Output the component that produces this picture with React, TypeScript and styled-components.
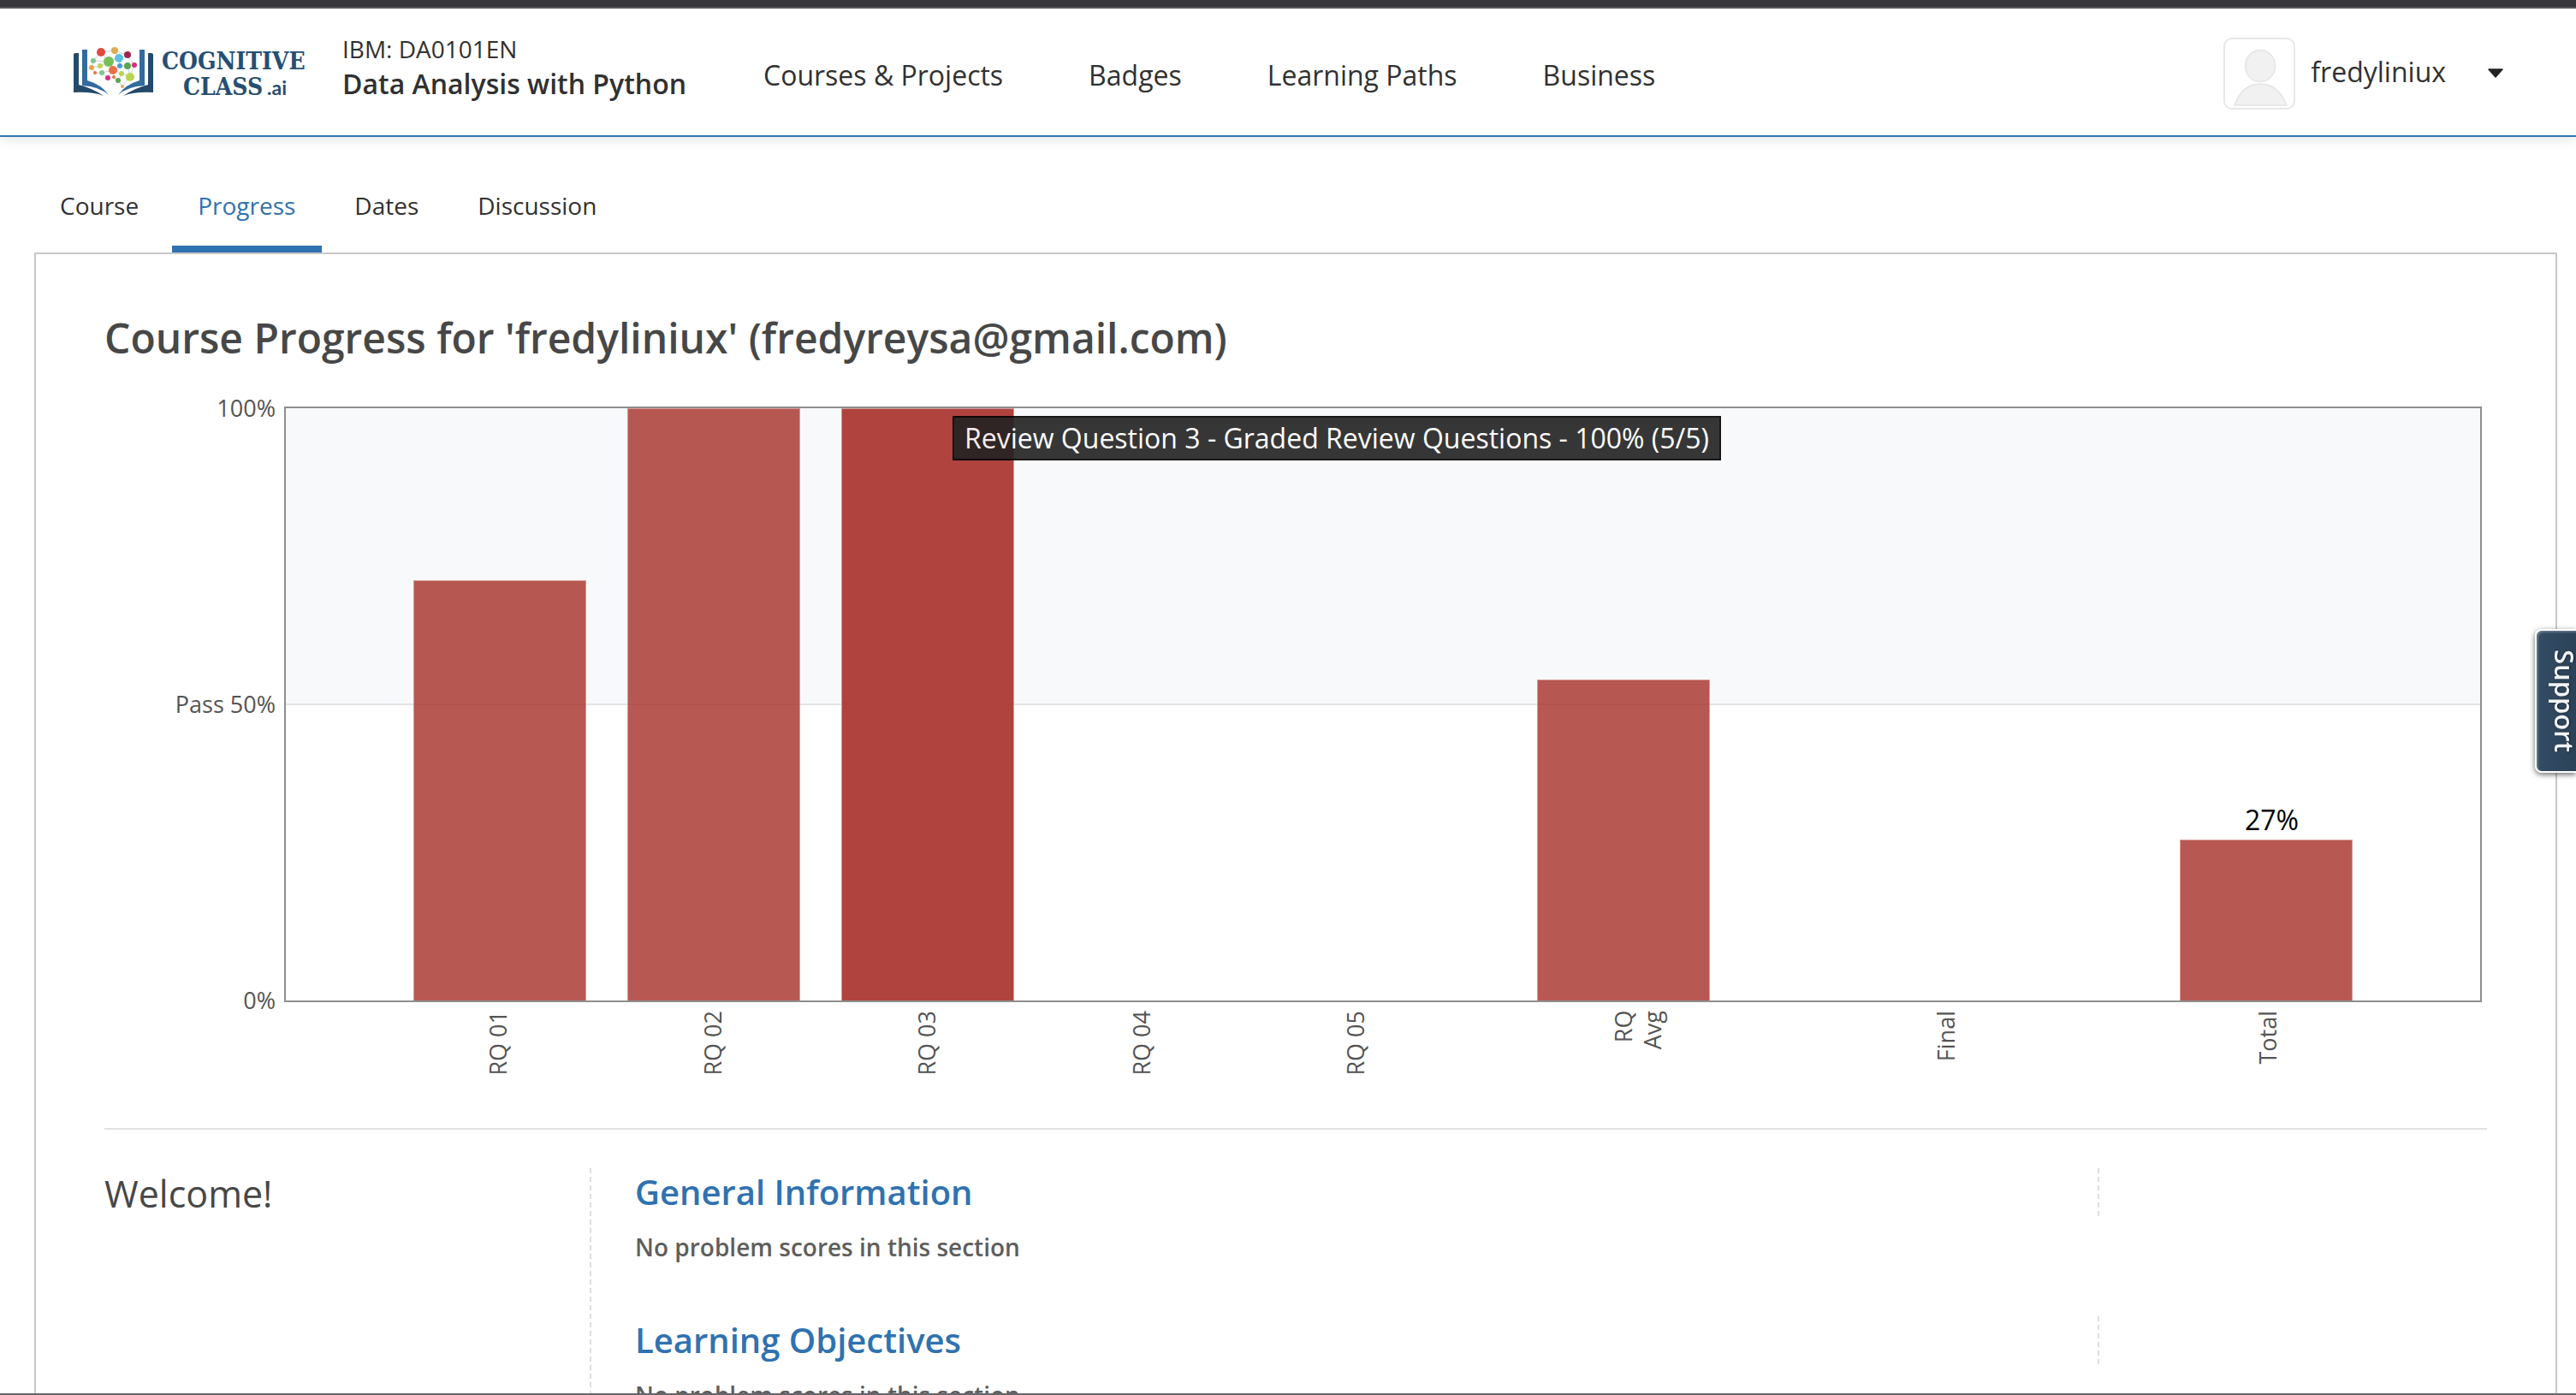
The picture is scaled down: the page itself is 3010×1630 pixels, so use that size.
import React from "react";
import styled, { createGlobalStyle } from "styled-components";

const GlobalStyle = createGlobalStyle`
  * { box-sizing: border-box; }
  body {
    margin: 0;
    background: #fff;
    color: #313131;
    font-family: "Open Sans", "Noto Sans", sans-serif;
    font-size: 28px;
    line-height: 40px;
  }
  h1, h2, h3, p { margin: 0; padding: 0; }
  a { color: inherit; text-decoration: none; }
`;

const Frame = styled.div`
  height: 100vh;
  overflow: hidden;
  border-top: 8px solid #36363b;
  border-bottom: 2px solid #66666a;
`;

const Header = styled.header`
  display: flex;
  align-items: center;
  height: 152px;
  padding: 0 82px 0 84px;
  border-top: 2px solid #58585c;
  border-bottom: 2px solid #3175b3;
  box-shadow: 0 2px 14px rgba(0, 0, 0, 0.12);
`;

const LogoLink = styled.a`
  display: block;
  width: 272px;
  height: 62px;
  margin-right: 44px;
`;

const LogoArt = styled.svg`
  display: block;
  width: 272px;
  height: 62px;
  overflow: visible;
`;

const CourseHeading = styled.h1`
  display: flex;
  flex-direction: column;
  padding-bottom: 10px;
  font-size: 32px;
  font-weight: 600;
  line-height: 44px;
  white-space: nowrap;
`;

const CourseCode = styled.span`
  font-size: 28px;
  font-weight: 400;
  line-height: 38px;
`;

const MainNav = styled.nav`
  display: flex;
  gap: 100px;
  margin-left: 90px;
  padding-top: 8px;
  font-size: 32px;
  line-height: 44px;
  white-space: nowrap;
`;

const UserMenu = styled.div`
  display: flex;
  align-items: center;
  margin-left: auto;
  font-size: 32px;
  line-height: 44px;
`;

const Avatar = styled.svg`
  width: 84px;
  height: 84px;
  margin: 4px 18px 0 0;
  border: 2px solid #e7e7e7;
  border-radius: 10px;
`;

const MenuButton = styled.button`
  display: flex;
  margin-left: 46px;
  padding: 4px 2px 0;
  border: 0;
  background: none;
`;

const Tabs = styled.nav`
  display: flex;
  gap: 8px;
  padding: 60px 40px 0;
`;

const Tab = styled.a<{ $active?: boolean }>`
  padding: 0 31px 27px 30px;
  color: ${(p) => (p.$active ? "#3072b0" : "#313131")};
  border-bottom: 8px solid ${(p) => (p.$active ? "#3072b0" : "transparent")};
`;

const Panel = styled.main`
  margin: 0 22px 0 40px;
  padding: 66px 80px 80px;
  border: 2px solid #c8c8c8;
`;

const PageTitle = styled.h2`
  color: #474747;
  font-size: 48px;
  font-weight: 600;
  line-height: 64px;
`;

const Chart = styled.figure`
  display: grid;
  grid-template: 696px 147px / 210px 1fr;
  margin: 48px 0 0;
  padding-right: 6px;
  color: #545454;
  font-size: 27px;
  line-height: 36px;
`;

const YAxis = styled.div`
  display: flex;
  flex-direction: column;
  justify-content: space-between;
  margin: -16px 0;
  padding-right: 10px;
  text-align: right;
`;

const SLOTS = `
  149fr 202fr 48fr 202fr 48fr 202fr 48fr 202fr 48fr 202fr
  111fr 202fr 174fr 202fr 173fr 202fr 149fr
`;

const Plot = styled.div`
  display: grid;
  grid-template-columns: ${SLOTS};
  align-items: end;
  border: 2px solid #8e8e8e;
  background: linear-gradient(#f8f9fb 0 345px, #e2e3e4 345px 347px, #fff 347px);
`;

const Slot = styled.div<{ $column: number }>`
  grid-column: ${(p) => p.$column};
  position: relative;
  height: 100%;
  display: flex;
  align-items: flex-end;
`;

const Bar = styled.div<{ $active?: boolean }>`
  flex: 1;
  border: solid #d79b98;
  border-width: 1px 1px 0;
  background: ${(p) => (p.$active ? "rgba(169, 51, 46, 0.92)" : "rgba(166, 46, 39, 0.8)")};
`;

const BarValue = styled.span`
  position: absolute;
  left: 76px;
  bottom: calc(27% + 2px);
  color: #000;
  font-size: 32px;
  line-height: 44px;
`;

const Tooltip = styled.div`
  position: absolute;
  z-index: 1;
  top: 9px;
  left: 130px;
  padding: 2px 12px;
  border: 2px solid #000;
  background: #222;
  color: #fff;
  opacity: 0.9;
  font-size: 32px;
  line-height: 44px;
  white-space: nowrap;
`;

const XAxis = styled.div`
  grid-column: 2;
  display: grid;
  grid-template-columns: ${SLOTS};
  padding-top: 10px;
`;

const Tick = styled.div<{ $column: number }>`
  grid-column: ${(p) => p.$column};
  justify-self: start;
  align-self: start;
  margin-left: calc(50% - 17px);
  writing-mode: vertical-rl;
  transform: rotate(180deg);
  text-align: right;
  white-space: pre;
  line-height: 34px;
`;

const Chapter = styled.section`
  display: flex;
  align-items: stretch;
  padding-top: 45px;
  border-top: 2px solid #e2e2e2;
`;

const dashes = "repeating-linear-gradient(#dedede 0 6px, transparent 6px 10px)";

const ChapterTitle = styled.h2`
  flex: 0 0 569px;
  background: ${dashes} right / 2px 100% no-repeat;
  color: #474747;
  font-size: 43px;
  font-weight: 400;
  line-height: 60px;
`;

const SectionList = styled.div`
  flex: 1;
  display: flex;
  flex-direction: column;
  gap: 61px;
  padding-left: 51px;
`;

const SectionTitle = styled.h3`
  margin: 0 453px 16px 0;
  background: ${dashes} right / 2px 100% no-repeat;
  color: #3072b0;
  font-size: 40px;
  font-weight: 600;
  line-height: 56px;
`;

const SectionNote = styled.p`
  color: #5e5e5e;
  font-weight: 600;
`;

const SupportTab = styled.button`
  position: fixed;
  top: 735px;
  right: 0;
  width: 48px;
  height: 168px;
  padding: 0 0 0 20px;
  border: 2px solid #fff;
  border-right: 0;
  border-radius: 8px 0 0 8px;
  background: linear-gradient(90deg, #344d64, #2b4258);
  box-shadow: 0 2px 6px rgba(0, 0, 0, 0.6), inset 2px 2px 2px rgba(255, 255, 255, 0.25);
  color: #f2f4f6;
  font-family: inherit;
  font-size: 31px;
  font-weight: 600;
  line-height: 26px;
  text-shadow: 0 -1px 2px rgba(0, 0, 0, 0.6);
  writing-mode: vertical-rl;
`;

const LINKS: [number, number, number, number][] = [
  [32, 7, 48, 5], [48, 5, 63, 11], [32, 7, 41, 18], [41, 18, 53, 14], [53, 14, 63, 11],
  [23, 17, 32, 7], [23, 17, 41, 18], [21, 25, 32, 23], [32, 23, 41, 18], [41, 18, 46, 28],
  [46, 28, 54, 23], [54, 23, 53, 14], [54, 23, 63, 23], [63, 23, 71, 22], [71, 22, 63, 11],
  [63, 23, 66, 35], [71, 22, 66, 35], [46, 28, 56, 32], [56, 32, 66, 35], [46, 28, 40, 37],
  [33, 31, 46, 28], [33, 31, 40, 37], [21, 25, 25, 31], [25, 31, 33, 31], [46, 36, 52, 40],
  [52, 40, 56, 32], [52, 40, 57, 47], [57, 47, 66, 35], [23, 17, 21, 25], [48, 5, 53, 14],
];

const DOTS: [number, number, number, string][] = [
  [32, 7, 5, "#e04a3f"], [48, 5, 4, "#dcae55"], [63, 10, 4, "#9c2850"], [53, 14, 5, "#5cbfe4"],
  [41, 18, 6, "#76bf57"], [23, 17, 3, "#7fc494"], [21, 25, 3, "#eda04c"], [31, 23, 3, "#b9d651"],
  [46, 28, 5, "#ea7043"], [54, 23, 3, "#4b9bd8"], [63, 23, 4, "#5ba54e"], [71, 22, 3, "#d62f78"],
  [33, 31, 3, "#7fc494"], [25, 31, 2, "#ea7043"], [40, 37, 3, "#d62f78"], [47, 36, 2, "#ea7043"],
  [56, 32, 3, "#b9d651"], [66, 36, 5, "#b9d651"], [52, 40, 3, "#5ba54e"], [57, 47, 2, "#dcae55"],
];

function Logo() {
  return (
    <LogoArt viewBox="0 0 272 62" role="img" aria-label="Cognitive Class.ai">
      <g stroke="#c9ced3" strokeWidth="1">
        {LINKS.map(([x1, y1, x2, y2], i) => (
          <line key={i} x1={x1 + 2} y1={y1 + 1} x2={x2 + 2} y2={y2 + 1} />
        ))}
      </g>
      {DOTS.map(([cx, cy, r, fill], i) => (
        <circle key={i} cx={cx + 2} cy={cy + 1} r={r} fill={fill} />
      ))}
      <path fill="#24496b" d="M2 11Q2 9 4 9H8V46Q24 50 37 59Q24 54 2 55ZM95 11Q95 9 93 9H89V46Q73 50 60 59Q73 54 95 55Z" />
      <path fill="#316ba0" d="M12 5H18V41Q35 46 43 58Q32 48 12 47ZM85 5H79V41Q62 46 54 58Q65 48 85 47Z" />
      <g fill="#264f73" fontFamily="'DejaVu Serif Condensed', 'DejaVu Serif', serif" fontWeight="700" fontSize="28">
        <text x="105" y="28">COGNITIVE</text>
        <text x="130" y="58">CLASS</text>
      </g>
      <text x="228" y="58" fill="#264f73" fontFamily="Lato, sans-serif" fontWeight="700" fontSize="23">.ai</text>
    </LogoArt>
  );
}

const NAV = ["Courses & Projects", "Badges", "Learning Paths", "Business"];
const TABS = ["Course", "Progress", "Dates", "Discussion"];

const SCORES = [
  { label: "RQ 01", value: 71 },
  { label: "RQ 02", value: 100 },
  { label: "RQ 03", value: 100, note: "Review Question 3 - Graded Review Questions - 100% (5/5)" },
  { label: "RQ 04", value: 0 },
  { label: "RQ 05", value: 0 },
  { label: "RQ\nAvg", value: 54.2 },
  { label: "Final", value: 0 },
  { label: "Total", value: 27.1, caption: "27%" },
];

const SECTIONS = ["General Information", "Learning Objectives"];

export default function App() {
  return (
    <Frame>
      <GlobalStyle />
      <Header>
        <LogoLink href="#"><Logo /></LogoLink>
        <CourseHeading>
          <CourseCode>IBM: DA0101EN</CourseCode>
          Data Analysis with Python
        </CourseHeading>
        <MainNav>
          {NAV.map((item) => <a key={item} href="#">{item}</a>)}
        </MainNav>
        <UserMenu>
          <Avatar viewBox="0 0 80 80" fill="#f1f1f1" stroke="#e4e4e4" strokeWidth="1.5">
            <ellipse cx="41" cy="31" rx="17.5" ry="18.5" />
            <path d="M11 77Q20 52 41 52Q62 52 72 77Z" />
          </Avatar>
          <a href="#">fredyliniux</a>
          <MenuButton aria-label="More options">
            <svg width="20" height="12" viewBox="0 0 20 12">
              <path d="M2 1H18L10 10Z" fill="#222" stroke="#222" strokeWidth="1.5" strokeLinejoin="round" />
            </svg>
          </MenuButton>
        </UserMenu>
      </Header>
      <Tabs>
        {TABS.map((tab) => (
          <Tab key={tab} href="#" $active={tab === "Progress"}>{tab}</Tab>
        ))}
      </Tabs>
      <Panel>
        <PageTitle>Course Progress for 'fredyliniux' (fredyreysa@gmail.com)</PageTitle>
        <Chart>
          <YAxis>
            <span>100%</span>
            <span>Pass 50%</span>
            <span>0%</span>
          </YAxis>
          <Plot>
            {SCORES.map((s, i) => (
              <Slot key={s.label} $column={2 * i + 2}>
                {s.value > 0 && <Bar $active={!!s.note} style={{ height: `${s.value}%` }} />}
                {s.caption && <BarValue>{s.caption}</BarValue>}
                {s.note && <Tooltip>{s.note}</Tooltip>}
              </Slot>
            ))}
          </Plot>
          <XAxis>
            {SCORES.map((s, i) => (
              <Tick key={s.label} $column={2 * i + 2}>{s.label}</Tick>
            ))}
          </XAxis>
        </Chart>
        <Chapter>
          <ChapterTitle>Welcome!</ChapterTitle>
          <SectionList>
            {SECTIONS.map((name) => (
              <section key={name}>
                <SectionTitle><a href="#">{name}</a></SectionTitle>
                <SectionNote>No problem scores in this section</SectionNote>
              </section>
            ))}
          </SectionList>
        </Chapter>
      </Panel>
      <SupportTab>Support</SupportTab>
    </Frame>
  );
}
